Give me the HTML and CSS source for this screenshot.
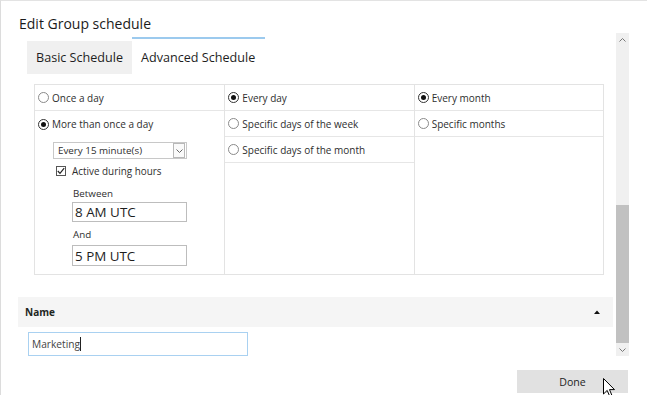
FILE: index.html
```html
<!DOCTYPE html>
<html lang="en">
<head>
    <meta charset="UTF-8">
    <title>Edit Group schedule</title>
    <link rel="stylesheet" href="styles.css">
</head>
<body>
    <div class="window">
        <div class="title">Edit Group schedule</div>

        <div class="scroll-area">
            <div class="content">
                <div class="tabs">
                    <div class="tab">Basic Schedule</div>
                    <div class="tab tab-active">Advanced Schedule</div>
                </div>

                <div class="schedule-grid">
                    <div class="col">
                        <div class="option-row"><span class="radio"></span>Once a day</div>
                        <div class="option-row plain"><span class="radio checked"></span>More than once a day</div>
                        <div class="sub-options">
                            <div class="dropdown">
                                <span>Every 15 minute(s)</span>
                                <span class="dropdown-btn">
                                    <svg width="7" height="4" viewBox="0 0 7 4"><polyline points="0.5,0.5 3.5,3.5 6.5,0.5" fill="none" stroke="#666" stroke-width="1"/></svg>
                                </span>
                            </div>
                            <div class="check-row">
                                <span class="checkbox">
                                    <svg width="8" height="8" viewBox="0 0 8 8"><polyline points="0.8,4 3,6.3 7.2,1.2" fill="none" stroke="#222" stroke-width="1.2"/></svg>
                                </span>
                                Active during hours
                            </div>
                            <div class="field-label">Between</div>
                            <div class="time-input">8 AM UTC</div>
                            <div class="field-label second">And</div>
                            <div class="time-input second">5 PM UTC</div>
                        </div>
                    </div>
                    <div class="col">
                        <div class="option-row"><span class="radio checked"></span>Every day</div>
                        <div class="option-row"><span class="radio"></span>Specific days of the week</div>
                        <div class="option-row"><span class="radio"></span>Specific days of the month</div>
                    </div>
                    <div class="col">
                        <div class="option-row"><span class="radio checked"></span>Every month</div>
                        <div class="option-row"><span class="radio"></span>Specific months</div>
                    </div>
                </div>

                <div class="section-header">
                    <span>Name</span>
                    <svg width="6" height="4" viewBox="0 0 6 4"><polygon points="0,4 3,0.5 6,4" fill="#111"/></svg>
                </div>
                <div class="name-input">Marketing<span class="text-caret"></span></div>
            </div>

            <div class="scrollbar">
                <div class="scroll-arrow">
                    <svg width="7" height="4" viewBox="0 0 7 4"><polyline points="0.5,3.5 3.5,0.5 6.5,3.5" fill="none" stroke="#777" stroke-width="1"/></svg>
                </div>
                <div class="scroll-track"><div class="scroll-thumb"></div></div>
                <div class="scroll-arrow">
                    <svg width="7" height="4" viewBox="0 0 7 4"><polyline points="0.5,0.5 3.5,3.5 6.5,0.5" fill="none" stroke="#777" stroke-width="1"/></svg>
                </div>
            </div>
        </div>

        <div class="footer">
            <button type="button" class="done-button">
                Done
                <svg class="mouse-cursor" width="13" height="20" viewBox="0 0 13 20"><path d="M0.5,0.5 L0.5,16 L4.2,12.4 L6.8,18.5 L9,17.6 L6.5,11.6 L11.5,11.6 Z" fill="#fff" stroke="#000" stroke-width="1"/></svg>
            </button>
        </div>
    </div>
</body>
</html>
```

FILE: styles.css
```css
body {
    margin: 0;
    padding: 0;
    background: #fff;
    overflow: hidden;
}

.window {
    height: 395px;
    box-sizing: border-box;
    border-top: 1px solid #e3e3e3;
    border-left: 1px solid #dcdcdc;
    display: flex;
    flex-direction: column;
    font-family: "Open Sans", sans-serif;
    color: #222;
}

.title {
    margin: 13px 0 0 18px;
    height: 19px;
    font-size: 14px;
    line-height: 19px;
    color: #1b1b1b;
}

.scroll-area {
    display: flex;
    height: 323px;
}

.content {
    width: 595px;
    padding-left: 17px;
    overflow: hidden;
}

/* tabs */
.tabs {
    display: flex;
    align-items: flex-end;
    margin: 4px 0 0 9px;
}

.tab {
    height: 33px;
    box-sizing: border-box;
    padding: 0 9px;
    display: flex;
    align-items: center;
    font-size: 12.6px;
    background: #f0f0f0;
    color: #1e1e1e;
}

.tab-active {
    height: 37px;
    border-top: 2px solid #9ccaee;
    padding: 2px 10px 0 9px;
    background: #fff;
}

/* schedule options */
.schedule-grid {
    margin: 10px 9px 0 16px;
    display: grid;
    grid-template-columns: repeat(3, 1fr);
    border: 1px solid #e3e3e3;
}

.col + .col {
    border-left: 1px solid #e3e3e3;
}

.option-row {
    height: 26px;
    box-sizing: border-box;
    display: flex;
    align-items: center;
    gap: 3px;
    padding-left: 3px;
    font-size: 10px;
    color: #2e2e2e;
    border-bottom: 1px solid #e6e6e6;
}

.option-row.plain {
    border-bottom: none;
}

.radio {
    width: 11px;
    height: 11px;
    box-sizing: border-box;
    border: 1px solid #8a8a8a;
    border-radius: 50%;
    display: flex;
    align-items: center;
    justify-content: center;
    flex: none;
}

.radio.checked {
    border-color: #333;
}

.radio.checked::after {
    content: "";
    width: 5px;
    height: 5px;
    border-radius: 50%;
    background: #111;
}

.sub-options {
    padding: 5px 0 8px 18px;
}

.dropdown {
    width: 134px;
    height: 17px;
    box-sizing: border-box;
    border: 1px solid #c8c8c8;
    display: flex;
    align-items: center;
    justify-content: space-between;
    padding-left: 4px;
    font-size: 9.8px;
    color: #2e2e2e;
}

.dropdown-btn {
    width: 12px;
    height: 15px;
    box-sizing: border-box;
    border: 1px solid #b8b8b8;
    margin-right: 1px;
    display: flex;
    align-items: center;
    justify-content: center;
    background: #fafafa;
}

.check-row {
    margin: 4px 0 0 3px;
    height: 16px;
    display: flex;
    align-items: center;
    gap: 6px;
    font-size: 9.9px;
    color: #2e2e2e;
}

.checkbox {
    width: 10px;
    height: 10px;
    box-sizing: border-box;
    border: 1px solid #555;
    display: flex;
    align-items: center;
    justify-content: center;
}

.field-label {
    margin: 8px 0 0 20px;
    line-height: 14px;
    font-size: 9.8px;
    color: #2e2e2e;
}

.field-label.second {
    margin-top: 6px;
}

.time-input {
    margin: 1px 0 0 19px;
    width: 115px;
    height: 20px;
    box-sizing: border-box;
    border: 1px solid #bdbdbd;
    padding-left: 2px;
    display: flex;
    align-items: center;
    font-size: 13.4px;
    color: #1e1e1e;
}

.time-input.second {
    margin-top: 3px;
    height: 21px;
}

/* name section */
.section-header {
    margin-top: 22px;
    height: 30px;
    background: #f5f5f5;
    display: flex;
    align-items: center;
    justify-content: space-between;
    padding: 0 13px 0 7px;
    font-size: 10px;
    font-weight: 700;
    color: #1e261e;
}

.name-input {
    margin: 5px 0 0 10px;
    width: 220px;
    height: 24px;
    box-sizing: border-box;
    border: 1px solid #a9d1f1;
    padding-left: 3px;
    display: flex;
    align-items: center;
    font-size: 10.2px;
    color: #444;
}

.text-caret {
    width: 1px;
    height: 14px;
    background: #222;
}

/* scrollbar */
.scrollbar {
    width: 13px;
    margin-left: 3px;
    background: #f0f0f0;
    display: flex;
    flex-direction: column;
}

.scroll-arrow {
    height: 13px;
    display: flex;
    align-items: center;
    justify-content: center;
}

.scroll-track {
    flex: 1;
    display: flex;
    flex-direction: column;
    justify-content: flex-end;
}

.scroll-thumb {
    height: 138px;
    background: #c1c1c1;
}

/* footer */
.footer {
    display: flex;
    justify-content: flex-end;
    padding: 14px 19px 0 0;
}

.done-button {
    position: relative;
    width: 111px;
    height: 23px;
    border: none;
    background: #e1e1e1;
    font-family: "Open Sans", sans-serif;
    font-size: 10.6px;
    color: #1e1e1e;
    padding: 0;
}

.mouse-cursor {
    position: absolute;
    left: 86px;
    top: 8px;
}
```
